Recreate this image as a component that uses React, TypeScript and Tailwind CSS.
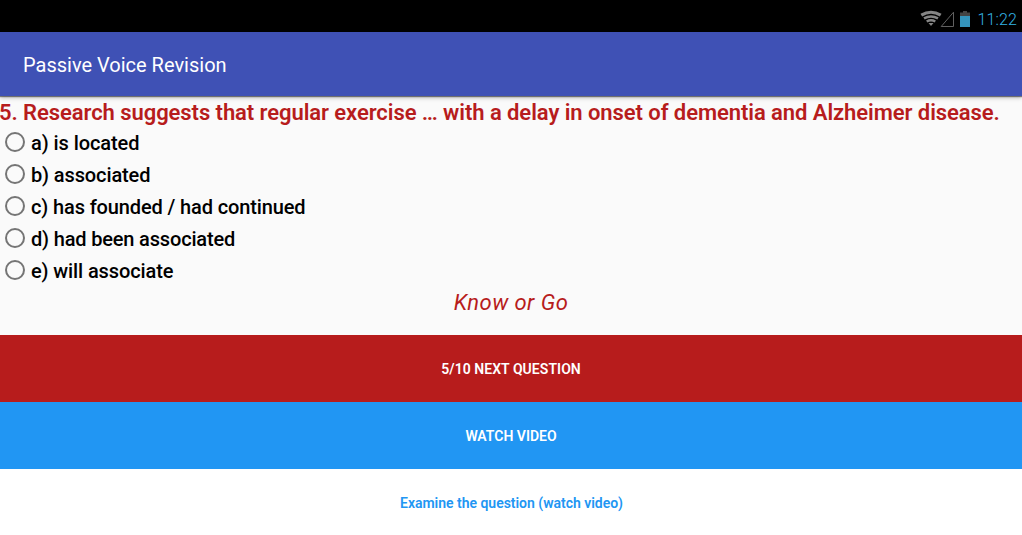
const answers = [
  { text: "a) is located", spacing: "tracking-[-0.08px]" },
  { text: "b) associated", spacing: "tracking-[-0.12px]" },
  { text: "c) has founded / had continued", spacing: "tracking-[-0.13px]" },
  { text: "d) had been associated", spacing: "tracking-[-0.17px]" },
  { text: "e) will associate", spacing: "tracking-[-0.11px]" },
];

function StatusIcons() {
  return (
    <svg className="h-5 w-[52px]" viewBox="920 8 52 20">
      <g fill="none" stroke="#858585" strokeWidth="2.5">
        <path d="M921.3 15.2Q931 9.3 940.7 15.2" strokeWidth="3.2" />
        <path d="M924 18.4Q931 14.4 938 18.4" />
        <path d="M926.7 21.5Q931 18.9 935.3 21.5" />
        <path d="M928.5 23H933.5L931 26Z" fill="#858585" stroke="none" />
      </g>
      <path d="M953.5 12.2V26.5H941.2Z" fill="none" stroke="#606060" />
      <path d="M960 12.5h3V11h4v1.5h3V16H960Z" fill="#444" />
      <path d="M960 16h10v11H960Z" fill="#3494bc" />
    </svg>
  );
}

export default function App() {
  return (
    <div className="flex h-[535px] w-[1022px] flex-col overflow-hidden bg-[#fafafa] font-[Roboto,sans-serif]">
      <header className="flex h-8 shrink-0 items-start justify-end bg-black pt-2 pr-[5px]">
        <StatusIcons />
        <span className="ml-[5px] text-[16px] leading-6 font-light tracking-[0.15px] text-[#33b5e5]">11:22</span>
      </header>
      <div className="z-10 flex h-16 shrink-0 items-center bg-[#3f51b5] pl-[23px] pt-0.5 text-[20px] text-white shadow-[0_1px_1px_rgba(0,0,0,0.45),0_2px_4px_rgba(0,0,0,0.25)]">Passive Voice Revision</div>
      <h1 className="-ml-px h-[30px] shrink-0 whitespace-nowrap pt-0.5 text-[22px] leading-[30px] font-semibold tracking-[-0.065px] text-[#b71c1c]">5. Research suggests that regular exercise … with a delay in onset of dementia and Alzheimer disease.</h1>
      <div className="h-[160px] shrink-0">
        {answers.map(({ text, spacing }) => (
          <div key={text} className={`flex h-8 items-center pl-[5px] text-[20px] font-medium text-black ${spacing}`}>
            <span className="mr-1.5 size-5 rounded-full border-2 border-[#757575]" />
            <span className="pt-0.5">{text}</span>
          </div>
        ))}
      </div>
      <div className="h-[49px] shrink-0 pt-px text-center text-[22px] leading-8 tracking-[0.45px] italic text-[#b71c1c]">Know or Go</div>
      <button className="h-[67px] shrink-0 bg-[#b71c1c] pt-0.5 text-[14px] font-semibold tracking-[0.05px] text-white">5/10 NEXT QUESTION</button>
      <button className="h-[67px] shrink-0 bg-[#2196f3] pt-0.5 text-[14px] font-semibold text-white">WATCH VIDEO</button>
      <button className="h-[67px] shrink-0 bg-white pt-0.5 pl-px text-[14px] font-semibold tracking-[-0.02px] text-[#2196f3]">Examine the question (watch video)</button>
    </div>
  );
}
